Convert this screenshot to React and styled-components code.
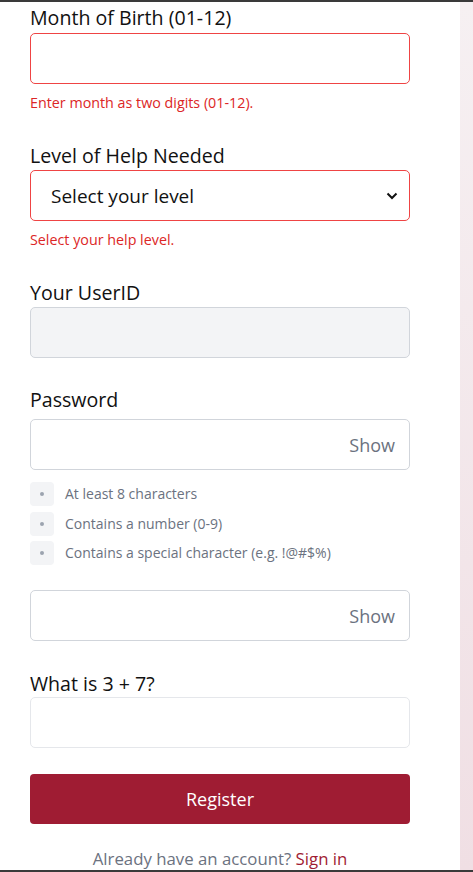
import React, { useState } from "react";
import styled, { createGlobalStyle } from "styled-components";

const GlobalStyle = createGlobalStyle`
  * { box-sizing: border-box; }
  body {
    margin: 0;
    font-family: "Open Sans", "Noto Sans", Arial, sans-serif;
    background: #fff;
  }
`;

const Page = styled.div`
  height: 872px;
  display: flex;
  flex-direction: column;
  overflow: hidden;
`;

const TopBar = styled.div`
  height: 2px;
  background: #3a3a3a;
  flex-shrink: 0;
`;

const BottomBar = styled.div`
  height: 2px;
  background: #3a3a3a;
  flex-shrink: 0;
`;

const Body = styled.div`
  flex: 1;
  display: flex;
  min-height: 0;
`;

const Main = styled.main`
  width: 460px;
  background: #fff;
  padding: 5px 50px 0 30px;
`;

const Strip = styled.div`
  flex: 1;
  background: linear-gradient(180deg, #f6f0f2 0%, #f0dfe4 100%);
`;

const Form = styled.form`
  display: flex;
  flex-direction: column;
`;

const Field = styled.div`
  display: flex;
  flex-direction: column;
  margin-bottom: ${(p) => p.$mb || 0}px;
`;

const Label = styled.label`
  font-size: 19.6px;
  line-height: 22px;
  color: #111;
  margin-bottom: ${(p) => p.$gap || 3}px;
`;

const InputWrap = styled.div`
  position: relative;
`;

const Input = styled.input`
  width: 100%;
  height: 51px;
  border-radius: 5px;
  border: 1px solid
    ${(p) => (p.$error ? "#ef4444" : p.$soft ? "#e5e7eb" : "#d1d5db")};
  background: ${(p) => (p.disabled ? "#f3f4f6" : "#fff")};
  font: inherit;
  font-size: 18px;
  padding: 0 16px;
  outline: none;
`;

const Select = styled.select`
  width: 100%;
  height: 51px;
  border-radius: 5px;
  border: 1px solid #ef4444;
  background: #fff;
  font-family: inherit;
  font-size: 19px;
  color: #111;
  padding: 0 16px 0 20px;
  appearance: none;
  outline: none;
`;

const Chevron = styled.svg`
  position: absolute;
  right: 12px;
  top: 50%;
  transform: translateY(-50%);
  pointer-events: none;
`;

const ShowBtn = styled.button`
  position: absolute;
  right: 15px;
  top: 50%;
  transform: translateY(-50%);
  border: none;
  background: none;
  font: inherit;
  font-size: 18px;
  color: #6b7280;
  padding: 0;
  cursor: pointer;
`;

const Error = styled.div`
  font-size: 14.3px;
  line-height: 18px;
  color: #dc2626;
  margin-top: 10px;
`;

const Checklist = styled.ul`
  list-style: none;
  margin: 12px 0 0;
  padding: 0;
  display: flex;
  flex-direction: column;
  gap: 5.5px;
`;

const CheckItem = styled.li`
  display: flex;
  align-items: center;
  gap: 11px;
  font-size: 14px;
  line-height: 24px;
  color: #6b7280;
`;

const Dot = styled.span`
  width: 24px;
  height: 24px;
  border-radius: 4px;
  background: #f3f4f6;
  display: flex;
  align-items: center;
  justify-content: center;
  &::after {
    content: "";
    width: 4px;
    height: 4px;
    border-radius: 50%;
    background: #9ca3af;
  }
`;

const Submit = styled.button`
  height: 50px;
  border: none;
  border-radius: 4px;
  background: #9f1c33;
  color: #fff;
  font: inherit;
  font-size: 18px;
  cursor: pointer;
`;

const Footer = styled.p`
  margin: 24px 0 0;
  text-align: center;
  font-size: 16.8px;
  line-height: 22px;
  color: #6b7280;
  a {
    color: #9f1c33;
    text-decoration: none;
  }
`;

const rules = [
  "At least 8 characters",
  "Contains a number (0-9)",
  "Contains a special character (e.g. !@#$%)",
];

export default function App() {
  const [show1, setShow1] = useState(false);
  const [show2, setShow2] = useState(false);

  return (
    <Page>
      <GlobalStyle />
      <TopBar />
      <Body>
        <Main>
          <Form onSubmit={(e) => e.preventDefault()}>
            <Field $mb={33}>
              <Label $gap={4}>Month of Birth (01-12)</Label>
              <Input $error />
              <Error>Enter month as two digits (01-12).</Error>
            </Field>

            <Field $mb={33}>
              <Label>Level of Help Needed</Label>
              <InputWrap>
                <Select defaultValue="">
                  <option value="">Select your level</option>
                  <option>Low</option>
                  <option>Medium</option>
                  <option>High</option>
                </Select>
                <Chevron width="12" height="8" viewBox="0 0 12 8">
                  <path d="M1.5 1.5 6 6l4.5-4.5" fill="none" stroke="#111" strokeWidth="2" />
                </Chevron>
              </InputWrap>
              <Error>Select your help level.</Error>
            </Field>

            <Field $mb={31}>
              <Label>Your UserID</Label>
              <Input disabled />
            </Field>

            <Field $mb={25}>
              <Label $gap={8}>Password</Label>
              <InputWrap>
                <Input type={show1 ? "text" : "password"} />
                <ShowBtn type="button" onClick={() => setShow1(!show1)}>
                  {show1 ? "Hide" : "Show"}
                </ShowBtn>
              </InputWrap>
              <Checklist>
                {rules.map((r) => (
                  <CheckItem key={r}>
                    <Dot />
                    {r}
                  </CheckItem>
                ))}
              </Checklist>
            </Field>

            <Field $mb={32}>
              <InputWrap>
                <Input type={show2 ? "text" : "password"} />
                <ShowBtn type="button" onClick={() => setShow2(!show2)}>
                  {show2 ? "Hide" : "Show"}
                </ShowBtn>
              </InputWrap>
            </Field>

            <Field $mb={26}>
              <Label $gap={2}>What is 3 + 7?</Label>
              <Input $soft />
            </Field>

            <Submit type="submit">Register</Submit>
            <Footer>
              Already have an account? <a href="#">Sign in</a>
            </Footer>
          </Form>
        </Main>
        <Strip />
      </Body>
      <BottomBar />
    </Page>
  );
}
